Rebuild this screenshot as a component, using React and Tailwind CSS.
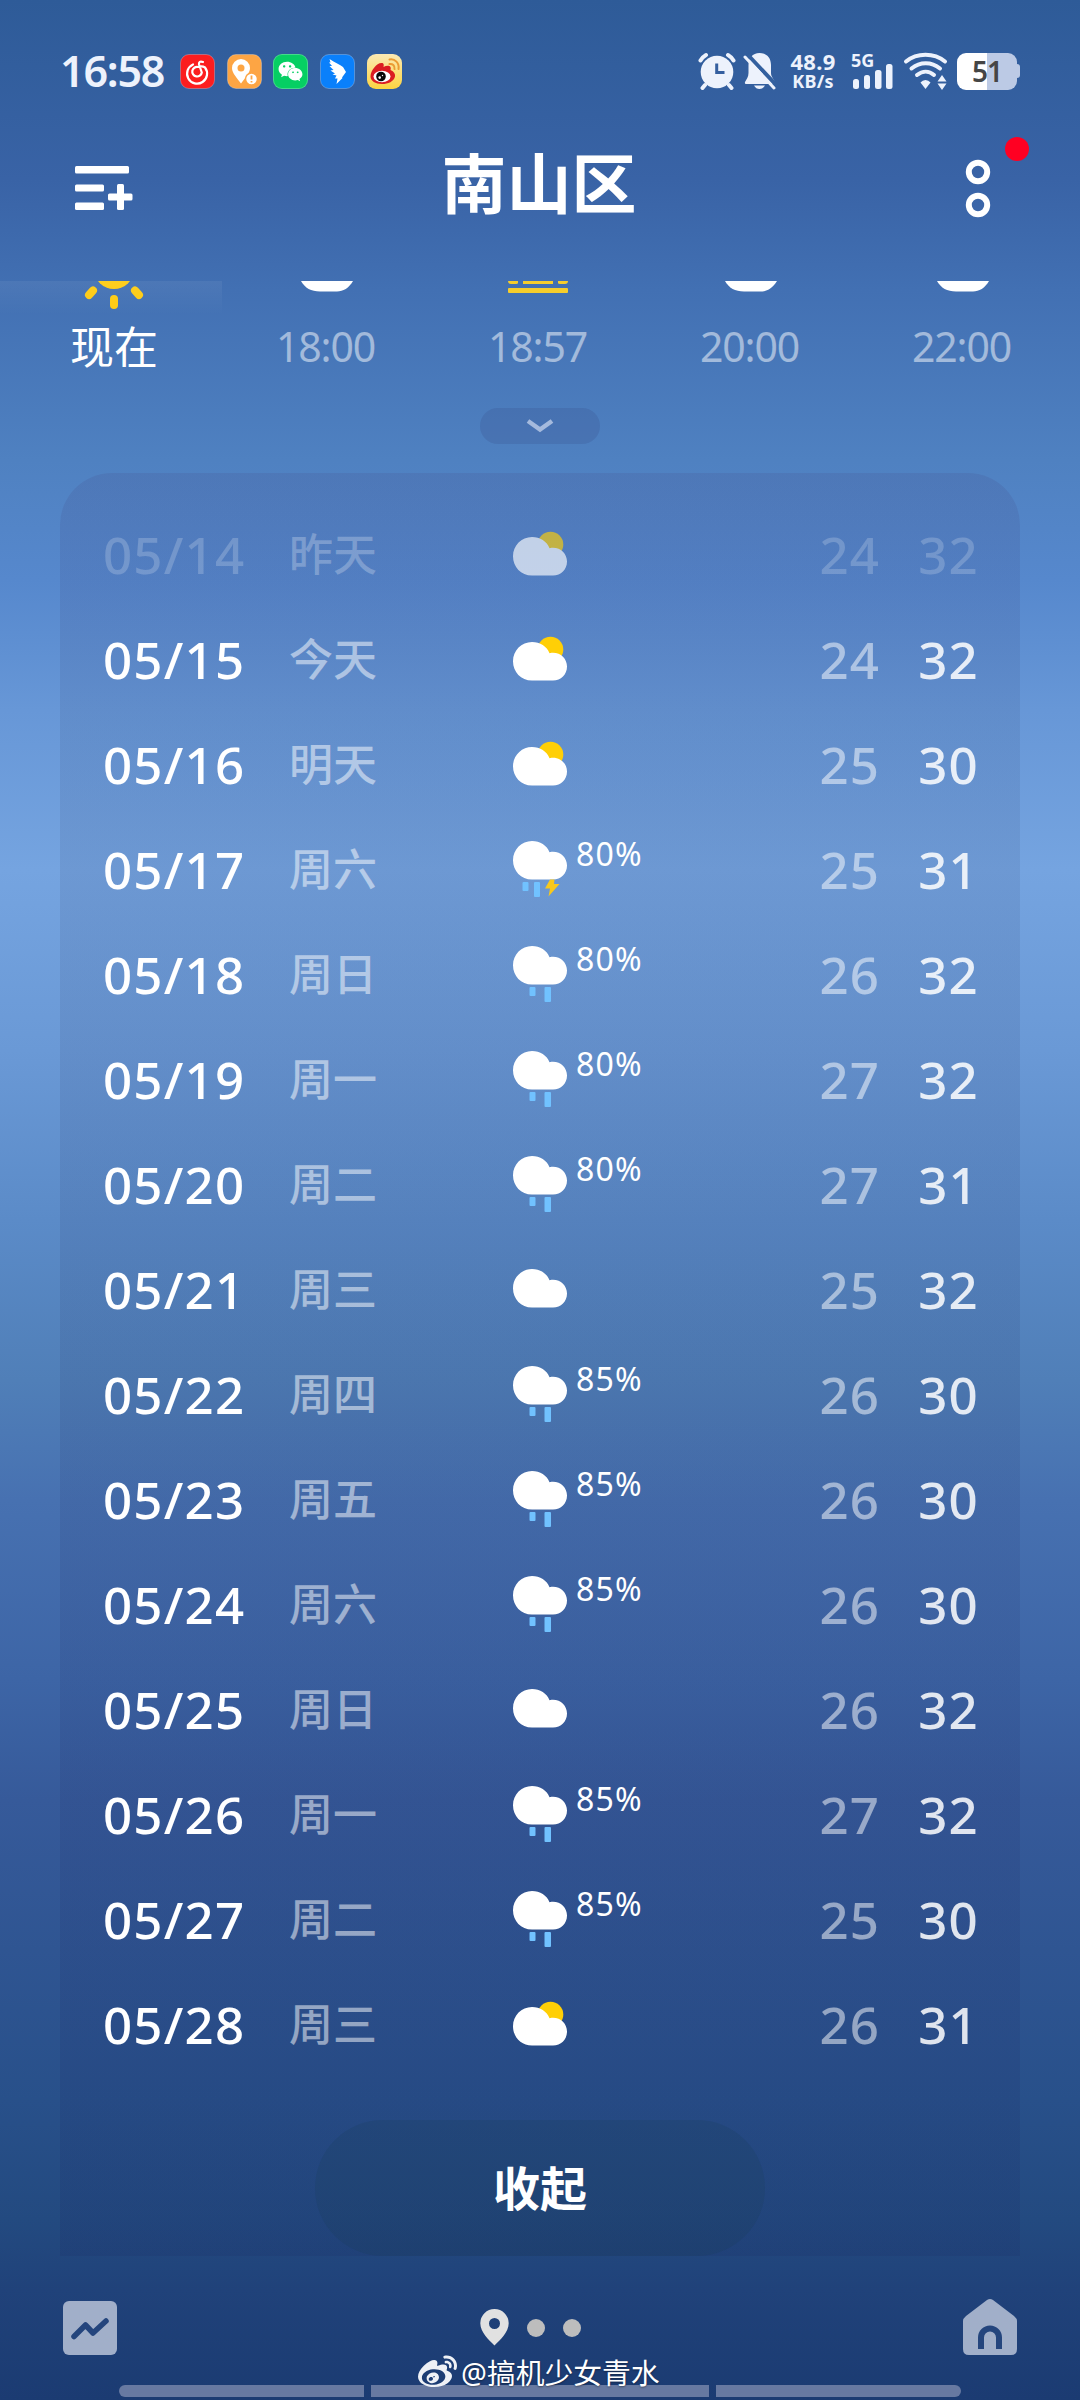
import React from 'react';
import { FaWeixin, FaWeibo } from 'react-icons/fa';

const forecast = [
    { date: '05/14', day: '昨天', icon: 'partly', low: 24, high: 32, past: true },
    { date: '05/15', day: '今天', icon: 'partly', low: 24, high: 32 },
    { date: '05/16', day: '明天', icon: 'partly', low: 25, high: 30 },
    { date: '05/17', day: '周六', icon: 'thunder', rain: '80%', low: 25, high: 31 },
    { date: '05/18', day: '周日', icon: 'rain', rain: '80%', low: 26, high: 32 },
    { date: '05/19', day: '周一', icon: 'rain', rain: '80%', low: 27, high: 32 },
    { date: '05/20', day: '周二', icon: 'rain', rain: '80%', low: 27, high: 31 },
    { date: '05/21', day: '周三', icon: 'cloudy', low: 25, high: 32 },
    { date: '05/22', day: '周四', icon: 'rain', rain: '85%', low: 26, high: 30 },
    { date: '05/23', day: '周五', icon: 'rain', rain: '85%', low: 26, high: 30 },
    { date: '05/24', day: '周六', icon: 'rain', rain: '85%', low: 26, high: 30 },
    { date: '05/25', day: '周日', icon: 'cloudy', low: 26, high: 32 },
    { date: '05/26', day: '周一', icon: 'rain', rain: '85%', low: 27, high: 32 },
    { date: '05/27', day: '周二', icon: 'rain', rain: '85%', low: 25, high: 30 },
    { date: '05/28', day: '周三', icon: 'partly', low: 26, high: 31 },
];

const hours = [
    { label: '现在', icon: 'sun' },
    { label: '18:00', icon: 'cloud' },
    { label: '18:57', icon: 'sunset' },
    { label: '20:00', icon: 'cloud' },
    { label: '22:00', icon: 'cloud' },
];

const CLOUD = 'M19 0C27 0 34 4.500 36.500 11.200C38 10.800 39 10.700 40 10.700C48 10.700 54 16.800 54 24.500C54 32.500 48 38.500 40 38.500H19C8 38.500 0 30 0 19.200C0 8.500 8.500 0 19 0Z';

const WeatherIcon = ({ type }) => {
    // Rainy clouds sit higher so the drops fit under them
    const wet = type === 'rain' || type === 'thunder';
    return (
        <svg width="54" height="70" viewBox="0 0 54 70" className="shrink-0">
            {type === 'partly' && <circle cx="37.500" cy="24.500" r="12.800" fill="#ffcf06" />}
            <path d={CLOUD} fill="#fff" transform={wet ? 'translate(0 6)' : type === 'cloudy' ? 'translate(0 14)' : 'translate(0 17)'} />
            {type === 'rain' && (
                <g fill="#71c2ff">
                    <rect x="16.500" y="47" width="6" height="9" rx="1" />
                    <rect x="31.500" y="47" width="6.500" height="15" rx="1" />
                </g>
            )}
            {type === 'thunder' && (
                <>
                    <g fill="#71c2ff">
                        <rect x="9.500" y="47" width="6" height="9" rx="1" />
                        <rect x="21" y="47" width="6" height="15" rx="1" />
                    </g>
                    <path d="M37 44.500H41.500L41 49H46.500L35.500 61.500L37 53.500H32Z" fill="#f8c81c" />
                </>
            )}
        </svg>
    );
};

// Only the lower part of every hourly icon shows under the header edge
const HourIcon = ({ type }) => (
    <svg width="64" height="32" viewBox="0 0 64 32">
        {type === 'sun' && (
            <g>
                <circle cx="32" cy="-12" r="20" fill="#fecb12" />
                <g stroke="#fecb12" strokeWidth="8" strokeLinecap="round">
                    <path d="M32 18V24" />
                    <path d="M11 9.500L7 14" />
                    <path d="M53 9.500L57 14" />
                </g>
            </g>
        )}
        {type === 'cloud' && <path d="M7 0H59C55 7 49 10.500 43 10.500H26C17 10.500 11 7 7 0Z" fill="#fff" />}
        {type === 'sunset' && (
            <g fill="#f6cd2c">
                <path d="M2 0H12V2Q12 3 10 3H5Q2 3 2 0Z" />
                <rect x="17" y="0" width="30" height="3" />
                <path d="M62 0H52V2Q52 3 54 3H59Q62 3 62 0Z" />
                <rect x="2" y="7" width="60" height="5" rx="1" />
            </g>
        )}
    </svg>
);

const AppIcons = () => (
    <div className="flex gap-[11.700px]">
        <svg width="35" height="35" viewBox="0 0 35 35">
            <rect x="0.500" y="0.500" width="34" height="34" rx="8.500" fill="#fb1d1f" stroke="#ffffff40" />
            <path d="M13 10.500A10 10 0 1 0 25 13.500Q22 11.500 18 13A4.800 4.800 0 1 0 21.800 18.500L19 10.500Q18.500 6.500 23 8" fill="none" stroke="#fff" strokeWidth="2.200" strokeLinecap="round" strokeLinejoin="round" />
        </svg>
        <svg width="35" height="35" viewBox="0 0 35 35">
            <rect x="0.500" y="0.500" width="34" height="34" rx="8.500" fill="#fda544" stroke="#ffffff40" />
            <path d="M14 5A9 9 0 0 1 23 14C23 19 18 24 14 29.500C10 24 5 19 5 14A9 9 0 0 1 14 5Z" fill="#fff" />
            <circle cx="14" cy="14" r="3.500" fill="#fda544" />
            <circle cx="24.500" cy="25" r="6" fill="#fff" stroke="#fda544" strokeWidth="1.500" />
            <path d="M24.500 21.500V25.500M24.500 27V28.500" stroke="#fda544" strokeWidth="1.800" />
        </svg>
        <div className="w-[35px] h-[35px] rounded-[9px] bg-[#06cf63] border border-white/25 flex items-center justify-center">
            <FaWeixin className="text-white text-[25px]" />
        </div>
        <svg width="35" height="35" viewBox="0 0 35 35">
            <rect x="0.500" y="0.500" width="34" height="34" rx="8.500" fill="#0a80fb" stroke="#ffffff40" />
            <path d="M9.500 5C15 8.500 20 10.500 23 13L26 18L22 23.500L22.500 24L16.500 30L17.500 24.500H15L16.500 21.500L12.500 20.500L15 19.500L10.500 16.500L13.500 16L9.500 12L12 12L9 8.500L10.500 8.500Z" fill="#fff" />
        </svg>
        <svg width="35" height="35" viewBox="0 0 35 35">
            <defs>
                <linearGradient id="weiboBg" x1="0" y1="0" x2="0" y2="1">
                    <stop offset="0" stopColor="#fbe9b4" />
                    <stop offset="1" stopColor="#fcd441" />
                </linearGradient>
            </defs>
            <rect width="35" height="35" rx="9" fill="url(#weiboBg)" />
            <path d="M3.500 22.500C3.500 17 9.500 9 14.500 9C17 9 17 11 16.500 13C20 11 25 11 23.500 16C27 17.500 28.500 20 28 22.500C27 27.500 21 30 15 30C8.500 30 3.500 27 3.500 22.500Z" fill="#db1d22" />
            <ellipse cx="15" cy="22.500" rx="8.500" ry="5.800" fill="#fff" />
            <circle cx="14" cy="22.500" r="4.800" fill="#0a0a0a" />
            <circle cx="12.700" cy="23.600" r="1.300" fill="#fff" />
            <circle cx="15.500" cy="21.500" r="0.700" fill="#fff" />
            <path d="M22.500 10C25.500 9.500 28 11.500 27.500 15" fill="none" stroke="#eb9b33" strokeWidth="2" strokeLinecap="round" />
            <path d="M22.500 5.500C28 4.500 32.500 9 31.500 15" fill="none" stroke="#eb9b33" strokeWidth="2" strokeLinecap="round" />
        </svg>
    </div>
);

const StatusBar = () => (
    <div className="h-[142px] pl-[60px] pr-[60px] flex items-center justify-between text-[#edf2fc]">
        <div className="flex items-center">
            <span className="w-[120px] -mt-[1px] text-[43px] font-semibold tracking-[-1.200px] leading-none">16:58</span>
            <AppIcons />
        </div>
        <div className="flex items-center">
            {/* Alarm */}
            <svg width="38" height="38" viewBox="0 0 38 38">
                <circle cx="19" cy="20" r="16.300" fill="currentColor" />
                <g stroke="currentColor" strokeWidth="4" strokeLinecap="round" fill="none">
                    <path d="M2.500 8.500Q4.500 5 8 3" />
                    <path d="M35.500 8.500Q33.500 5 30 3" />
                    <path d="M7 33L4.500 36M31 33L33.500 36" />
                </g>
                <path d="M18.700 11.500V20.500H26.500" fill="none" stroke="#355f9f" strokeWidth="3" />
            </svg>
            {/* Muted bell */}
            <svg width="34" height="38" viewBox="0 0 34 38" className="ml-[7px]">
                <path d="M16.500 1C24 1 28 6 28 13V21C28 25 31 27 32 30.500Q32 32 30 32H3Q1.500 32 2 30C3.500 27 5.500 25 5.500 21V13C5.500 6 9.500 1 16.500 1Z" fill="currentColor" />
                <path d="M11 33.500H22Q20 37 16.500 37Q13 37 11 33.500Z" fill="currentColor" />
                <path d="M5 3L34 34" stroke="#33609f" strokeWidth="4" />
                <path d="M2 5L31 36" stroke="currentColor" strokeWidth="3" strokeLinecap="round" />
            </svg>
            <div className="w-[48px] ml-[12px] flex flex-col items-center font-bold">
                <span className="text-[22px] leading-[20px] tracking-[0.300px]">48.9</span>
                <span className="text-[18px] leading-[20px] tracking-[0.300px]">KB/s</span>
            </div>
            <div className="relative ml-[14px] w-[44px] h-[38px]">
                <span className="absolute left-0 -top-[1px] text-[18px] leading-[18px] font-bold">5G</span>
                <svg width="44" height="38" viewBox="0 0 44 38">
                    <g fill="currentColor">
                        <rect x="2" y="27" width="6" height="10" rx="2.500" />
                        <rect x="13" y="23" width="6" height="14" rx="2.500" />
                        <rect x="24" y="18" width="6.500" height="19" rx="2.500" />
                        <rect x="35" y="12" width="6.500" height="25" rx="2.500" />
                    </g>
                </svg>
            </div>
            {/* Wifi with traffic arrows */}
            <svg width="46" height="38" viewBox="0 0 46 38" className="ml-[8px]">
                <g fill="none" stroke="currentColor" strokeWidth="4" strokeLinecap="round">
                    <path d="M3 9.500C14 0.500 31 0.500 42 9.500" />
                    <path d="M8.500 16.500C17 9.500 28.500 9.500 37 16.500" />
                    <path d="M14 23C19.500 18.500 26 18.500 31 23" />
                </g>
                <path d="M22.500 28Q25.500 28 27.500 30.500L22.500 37L17.500 30.500Q19.500 28 22.500 28Z" fill="currentColor" />
                <path d="M39 23L43.500 29.500H34.500ZM39 38L43.500 31.500H34.500Z" fill="currentColor" />
            </svg>
            <div className="ml-[8px] flex items-center">
                <div className="w-[60px] h-[37px] rounded-[9px] bg-[linear-gradient(90deg,#fff_50%,#bccae5_50%)] flex items-center justify-center">
                    <span className="-mt-[1px] text-[28px] font-semibold text-[#454545] leading-none tracking-[-1px]">51</span>
                </div>
                <div className="w-[3px] h-[14px] rounded-r-[3px] bg-[#bccae5]"></div>
            </div>
        </div>
    </div>
);

const Header = () => (
    <div className="relative h-[139px] flex justify-center">
        <svg width="60" height="46" viewBox="0 0 60 46" className="absolute left-[75px] top-[23px]">
            <g fill="#fff">
                <rect x="0" y="1" width="54" height="7.500" rx="1.500" />
                <rect x="0" y="19.500" width="29" height="7" rx="1.500" />
                <rect x="0" y="37.500" width="29" height="7.500" rx="1.500" />
                <rect x="33" y="28.500" width="24.500" height="7" rx="1.500" />
                <rect x="42" y="19" width="7" height="26" rx="1.500" />
            </g>
        </svg>
        <h1 className="mt-[9px] -ml-[2px] text-[65px] leading-[64px] font-bold text-white">南山区</h1>
        <svg width="70" height="84" viewBox="0 0 70 84" className="absolute left-[960px] top-[-8px]">
            <circle cx="18" cy="38" r="9.200" fill="none" stroke="#fff" strokeWidth="6" />
            <circle cx="18" cy="71" r="9.200" fill="none" stroke="#fff" strokeWidth="6" />
            <circle cx="57" cy="15" r="12" fill="#ff0022" />
        </svg>
    </div>
);

const Row = ({ item }) => (
    <div className="h-[105px] pl-[43px] pr-[41px] flex items-center text-[51px] font-medium tracking-[1.200px] leading-none text-white">
        <span className={item.past ? '-mt-[1px] w-[186px] text-white/20' : '-mt-[1px] w-[186px]'}>{item.date}</span>
        <span className={item.past ? '-mt-[1px] w-[224px] text-[44px] tracking-normal text-white/25' : '-mt-[1px] w-[224px] text-[44px] tracking-normal text-white/50'}>{item.day}</span>
        <div className={item.past ? 'flex items-center opacity-65' : 'flex items-center'}>
            <WeatherIcon type={item.icon} />
            <span className="ml-[9px] -mt-[32px] text-[32px] font-normal">{item.rain}</span>
        </div>
        <div className="ml-auto -mt-[1px] flex gap-[38px]">
            <span className={item.past ? 'text-white/20' : 'text-white/50'}>{item.low}</span>
            <span className={item.past ? 'text-white/20' : 'text-white/85'}>{item.high}</span>
        </div>
    </div>
);

const BottomBar = () => (
    <div className="relative h-[144px]">
        <div className="h-[144px] px-[63px] pt-[43px] flex justify-between items-start">
            <svg width="54" height="56" viewBox="0 0 54 56">
                <rect x="0" y="2" width="54" height="54" rx="6" fill="#a1afc9" />
                <path d="M11 37.500L22.500 26L30 34L43 22" fill="none" stroke="#24457d" strokeWidth="5.500" strokeLinecap="round" strokeLinejoin="round" />
            </svg>
            <div className="-ml-[19px] mt-[10px] flex items-center gap-[18px]">
                <svg width="29" height="37" viewBox="0 0 29 37">
                    <path fillRule="evenodd" d="M14.500 0A14.200 14.200 0 0 1 28.700 14.200C28.700 23 20 31 14.500 36.500C9 31 0.300 23 0.300 14.200A14.200 14.200 0 0 1 14.500 0ZM14.500 9A5.500 5.500 0 1 0 14.500 20A5.500 5.500 0 1 0 14.500 9Z" fill="#e1e1e1" />
                </svg>
                <div className="w-[18px] h-[18px] rounded-full bg-[#bdbdbd]"></div>
                <div className="w-[18px] h-[18px] rounded-full bg-[#bdbdbd]"></div>
            </div>
            <svg width="54" height="56" viewBox="0 0 54 56">
                <path d="M24 1Q27 -1 30 1L51 17Q54 19.500 54 22V50Q54 56 48 56H6Q0 56 0 50V22Q0 19.500 3 17Z" fill="#a1afc9" />
                <path d="M18 50V38.500A9 9 0 0 1 36 38.500V50" fill="none" stroke="#24457d" strokeWidth="6" />
            </svg>
        </div>
        {/* Gesture hints */}
        <div className="absolute left-[119px] bottom-[3px] w-[842px] flex gap-[7px]">
            <div className="w-[245px] h-[12px] rounded-l-full bg-[#6779a1]"></div>
            <div className="flex-1 h-[12px] bg-[#6779a1]"></div>
            <div className="w-[245px] h-[12px] rounded-r-full bg-[#6779a1]"></div>
        </div>
        <div className="absolute left-[418px] bottom-[8px] flex items-center gap-[4px] text-white">
            <FaWeibo className="text-[39px] text-[#eef1f6]" />
            <span className="text-[28.800px] leading-[36px] whitespace-nowrap [text-shadow:0_1px_2px_rgba(0,0,0,0.4)]">@搞机少女青水</span>
        </div>
    </div>
);

const App = () => {
    return (
        <div className="w-[1080px] h-[2400px] overflow-hidden flex flex-col font-['Noto_Sans','Noto_Sans_CJK_SC',sans-serif] bg-[linear-gradient(180deg,#2e5b98_0px,#3963a6_180px,#4270b3_290px,#4f81c1_460px,#5688cd_580px,#6797d7_710px,#75a4e0_870px,#6a99d6_1050px,#5b8bc8_1220px,#507fb8_1380px,#4771b1_1500px,#3d65a6_1680px,#365a9a_1800px,#2f5592_1950px,#28508a_2100px,#234a80_2220px,#20427a_2290px,#1b3b72_2400px)]">
            <StatusBar />
            <Header />

            {/* Hourly strip */}
            <div className="relative h-[127px] px-[8px] grid grid-cols-[repeat(5,212px)] overflow-hidden">
                <div className="absolute left-0 top-0 w-[222px] h-[34px] bg-linear-to-b from-white/6 to-white/0"></div>
                {hours.map((hour) => (
                    <div key={hour.label} className="flex flex-col items-center">
                        <HourIcon type={hour.icon} />
                        <span className={hour.icon === 'sun' ? 'mt-[12px] text-[44px] leading-[44px] text-white' : 'mt-[11px] -ml-[1px] text-[41px] leading-[44px] tracking-[-1.200px] text-white/50'}>{hour.label}</span>
                    </div>
                ))}
            </div>

            <div className="w-[120px] h-[36px] mx-auto rounded-full bg-[#323c78]/17 flex items-center justify-center">
                <svg width="28" height="16" viewBox="0 0 28 16">
                    <path d="M2 3L14 11.500L26 3" fill="none" stroke="#a5badd" strokeWidth="4.500" />
                </svg>
            </div>

            {/* Daily forecast */}
            <div className="mt-[29px] mx-[60px] h-[1783px] pt-[29px] rounded-t-[52px] bg-[linear-gradient(180deg,rgba(60,40,100,0.11)_0px,rgba(30,40,80,0.09)_250px,rgba(20,20,80,0.1)_1783px)]">
                {forecast.map((item) => (
                    <Row key={item.date} item={item} />
                ))}
                <button className="block w-[450px] h-[136px] mx-auto mt-[43px] rounded-full bg-[#183c50]/17 text-[47px] font-bold text-white">收起</button>
            </div>

            <BottomBar />
        </div>
    );
};

export default App;
